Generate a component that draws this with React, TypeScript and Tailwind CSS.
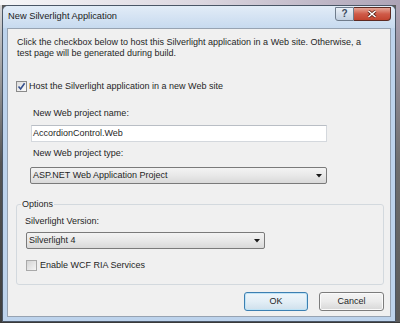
import React from "react";

const font = { fontFamily: '"Liberation Sans", Arial, sans-serif' };

function Check({ checked }: { checked?: boolean }) {
  return (
    <div
      className={
        "w-[11px] h-[11px] border flex items-center justify-center shrink-0 " +
        (checked
          ? "border-[#8a8a8a] bg-gradient-to-br from-[#dcdcdc] to-[#fbfbfb]"
          : "border-[#a9a9a9] bg-gradient-to-br from-[#d4d4d4] to-[#f5f5f5]")
      }
    >
      {checked && (
        <svg width="9" height="9" viewBox="0 0 9 9">
          <path d="M1.5 4.5 L3.6 7 L7.6 1.2" fill="none" stroke="#35508e" strokeWidth="1.6" />
        </svg>
      )}
    </div>
  );
}

function Arrow() {
  return (
    <svg width="6" height="4" viewBox="0 0 6 4" className="mr-[4px]">
      <path d="M0 0 H6 L3 3.5 Z" fill="#1a1a1a" />
    </svg>
  );
}

export default function App() {
  return (
    <div
      className="w-[400px] h-[323px] flex flex-col overflow-hidden bg-[#5a5a5a] text-[#1f1f1f]"
      style={font}
    >
      <div className="h-[5px] shrink-0 bg-gradient-to-r from-[#f6f6f8] via-[#dcd7e0] to-[#ada3b6]" />
      <div className="flex flex-1 min-h-0">
        <div className="w-[2px] bg-gradient-to-b from-[#d8d8da] via-[#555555] to-[#3f3f3f]" />
        <div className="w-[394px] flex flex-col border border-[#4a5666] rounded-t-[6px] bg-[#bdd3ec] overflow-hidden">
          {/* title bar */}
          <div className="h-[22px] shrink-0 flex justify-between items-center bg-gradient-to-b from-[#e2ecf7] to-[#c7daef]">
            <span className="pl-[5px] text-[9.3px] text-[#1c1c1c]">New Silverlight Application</span>
            <div className="self-start mt-[1px] mr-[4px] flex h-[14px]">
              <div className="w-[19px] h-full border border-[#6f7c8c] rounded-bl-[3px] bg-gradient-to-b from-[#eaf0f7] to-[#c2d0e1] flex items-center justify-center text-[10px] font-bold text-[#3b4b5e] leading-none">
                ?
              </div>
              <div className="w-[37px] h-full border border-l-0 border-[#5d2a22] rounded-br-[4px] bg-gradient-to-b from-[#e4a496] via-[#cf5a48] to-[#c2442f] flex items-center justify-center">
                <svg width="10" height="8" viewBox="0 0 10 8">
                  <path d="M1.5 1 L8.5 7 M8.5 1 L1.5 7" stroke="#5a2018" strokeWidth="3" />
                  <path d="M1.5 1 L8.5 7 M8.5 1 L1.5 7" stroke="#ffffff" strokeWidth="1.6" />
                </svg>
              </div>
            </div>
          </div>
          {/* body with frame */}
          <div className="flex-1 min-h-0 px-[4px] pb-[4px] flex">
            <div className="flex-1 border border-[#97a3b2] bg-[#f0f0f0] flex flex-col text-[9px]">
              <div className="ml-[9px] mt-[8px] leading-[11px]">
                <div className="whitespace-nowrap">
                  Click the checkbox below to host this Silverlight application in a Web site. Otherwise, a
                </div>
                <div className="whitespace-nowrap">test page will be generated during build.</div>
              </div>
              <div className="ml-[8px] mt-[21px] h-[12px] flex items-center gap-[2px]">
                <Check checked />
                <span className="leading-[12px]">Host the Silverlight application in a new Web site</span>
              </div>
              <div className="ml-[25px] mt-[15px] leading-[12px]">New Web project name:</div>
              <div className="ml-[23px] mt-[6px] w-[296px] h-[17px] bg-white border border-[#d4d8dd] border-t-[#b9bec5] flex items-center pl-[1px] leading-none">
                AccordionControl.Web
              </div>
              <div className="ml-[25px] mt-[5px] leading-[12px]">New Web project type:</div>
              <div className="ml-[22px] mt-[8px] w-[297px] h-[17px] border border-[#7a7a7a] rounded-[2px] bg-gradient-to-b from-[#f3f3f3] via-[#e8e8e8] to-[#d9d9d9] flex items-center justify-between pl-[2px] leading-none">
                <span>ASP.NET Web Application Project</span>
                <Arrow />
              </div>
              <fieldset className="ml-[8px] mt-[14px] w-[368px] border border-[#d3d9de] rounded-[3px] pl-[4px] pr-[8px] pt-[5px] pb-[13px]">
                <legend className="px-[1px] leading-[12px]">Options</legend>
                <div className="ml-[4px] leading-[12px]">Silverlight Version:</div>
                <div className="ml-[5px] mt-[5px] w-[239px] h-[17px] border border-[#7a7a7a] rounded-[2px] bg-gradient-to-b from-[#f3f3f3] via-[#e8e8e8] to-[#d9d9d9] flex items-center justify-between pl-[2px] leading-none">
                  <span>Silverlight 4</span>
                  <Arrow />
                </div>
                <div className="ml-[5px] mt-[10px] h-[12px] flex items-center gap-[2px]">
                  <Check />
                  <span className="leading-[12px] ml-[1px]">Enable WCF RIA Services</span>
                </div>
              </fieldset>
              <div className="mt-[7px] pr-[6px] flex justify-end gap-[11px]">
                <div className="w-[64px] h-[19px] border border-[#3c7fb1] rounded-[3px] bg-gradient-to-b from-[#eef6fb] via-[#e3eef6] to-[#cfe0ec] shadow-[inset_0_0_0_1px_#bfe3f6] flex items-center justify-center">
                  OK
                </div>
                <div className="w-[65px] h-[19px] border border-[#7c7c7c] rounded-[3px] bg-gradient-to-b from-[#f4f4f4] via-[#ebebeb] to-[#d7d7d7] shadow-[inset_0_0_0_1px_#fafafa] flex items-center justify-center">
                  Cancel
                </div>
              </div>
            </div>
          </div>
        </div>
        <div className="flex-1 bg-gradient-to-b from-[#aea4b6] via-[#6f6f6f] to-[#5a5a5a]" />
      </div>
      <div className="h-[1px] shrink-0 bg-[#3a3a3a]" />
    </div>
  );
}
